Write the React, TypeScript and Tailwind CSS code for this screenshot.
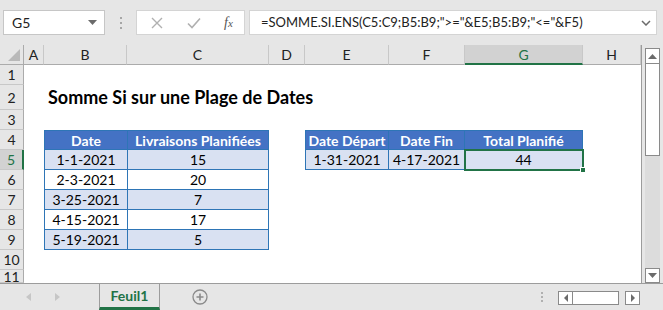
import React from "react";

const cols = ["A", "B", "C", "D", "E", "F", "G", "H"];
const rowHeights = [20, 25, 20, 20, 20, 20, 20, 20, 20, 20, 13];

const data = [
  ["1-1-2021", "15"],
  ["2-3-2021", "20"],
  ["3-25-2021", "7"],
  ["4-15-2021", "17"],
  ["5-19-2021", "5"],
];

function TopBar() {
  return (
    <div className="flex h-[45px] items-start bg-[#e6e6e6] pt-[10px]">
      {/* name box */}
      <div className="ml-[3px] flex h-[25px] w-[102px] shrink-0 items-center justify-between border border-[#c6c6c6] bg-white pl-[8px] pr-[7px] text-[14px] text-[#222]">
        <span>G5</span>
        <svg width="9" height="5" viewBox="0 0 9 5">
          <path d="M0 0h9L4.5 5z" fill="#6b6b6b" />
        </svg>
      </div>
      <div className="flex h-[25px] w-[31px] shrink-0 flex-col items-center justify-center gap-[3px]">
        <span className="h-[2px] w-[2px] bg-[#a6a6a6]" />
        <span className="h-[2px] w-[2px] bg-[#a6a6a6]" />
        <span className="h-[2px] w-[2px] bg-[#a6a6a6]" />
      </div>
      {/* formula buttons */}
      <div className="flex h-[25px] w-[109px] shrink-0 items-center border border-[#d4d4d4] bg-white">
        <svg className="ml-[14px]" width="12" height="12" viewBox="0 0 12 12">
          <path d="M1 1l10 10M11 1L1 11" stroke="#b0b0b0" strokeWidth="1.4" />
        </svg>
        <svg className="ml-[24px]" width="14" height="12" viewBox="0 0 14 12">
          <path d="M1 6.5l4 4L13 1.5" stroke="#b0b0b0" strokeWidth="1.6" fill="none" />
        </svg>
        <span className="ml-[23px] text-[14px] italic text-[#555]" style={{ fontFamily: "'Liberation Serif', serif" }}>
          f<span className="text-[11px]">x</span>
        </span>
      </div>
      {/* formula input */}
      <div className="ml-[4px] flex h-[25px] w-[408px] shrink-0 items-center justify-between border border-[#d4d4d4] bg-white pl-[11px] pr-[5px] text-[13px] text-[#222]">
        <span>=SOMME.SI.ENS(C5:C9;B5:B9;"&gt;="&amp;E5;B5:B9;"&lt;="&amp;F5)</span>
        <svg width="10" height="6" viewBox="0 0 10 6">
          <path d="M1 1l4 4 4-4" stroke="#6b6b6b" strokeWidth="1.5" fill="none" />
        </svg>
      </div>
    </div>
  );
}

function HeaderCell({ children, className = "" }: { children: React.ReactNode; className?: string }) {
  return (
    <div className={`flex items-center justify-center border-r border-[#c8c8c8] text-[14px] ${className}`}>
      {children}
    </div>
  );
}

function Cell({ children, className = "" }: { children: React.ReactNode; className?: string }) {
  return (
    <div className={`flex items-center justify-center border-r border-[#2e75b6] ${className}`}>
      {children}
    </div>
  );
}

function Sheet() {
  return (
    <div
      className="relative grid w-[642px] shrink-0 border-r border-[#9c9c9c] bg-white"
      style={{
        gridTemplateColumns: "24px 20px 83px 142px 36px 84px 76px 118px 58px",
        gridTemplateRows: `20px ${rowHeights.map((h) => h + "px").join(" ")}`,
      }}
    >
      {/* corner */}
      <div className="relative border-b border-r border-[#ababab] bg-[#e6e6e6]">
        <svg className="absolute bottom-[3px] right-[3px]" width="12" height="12" viewBox="0 0 12 12">
          <path d="M12 0v12H0z" fill="#b9b9b9" />
        </svg>
      </div>
      {cols.map((c) => (
        <HeaderCell
          key={c}
          className={
            c === "G"
              ? "border-b-2 border-b-[#217346] bg-[#d2d2d2] text-[#217346]"
              : "border-b border-b-[#ababab] bg-[#e6e6e6] text-[#222]"
          }
        >
          {c}
        </HeaderCell>
      ))}
      {rowHeights.map((h, i) => (
        <div
          key={i}
          className={`flex items-center justify-center border-b border-[#c8c8c8] text-[14px] ${
            i === 4
              ? "border-r-2 border-r-[#217346] bg-[#d2d2d2] text-[#217346]"
              : "border-r border-r-[#ababab] bg-[#e6e6e6] text-[#222]"
          }`}
          style={{ gridRow: i + 2, gridColumn: 1 }}
        >
          {i + 1}
        </div>
      ))}

      {/* title */}
      <div className="col-start-3 col-span-4 row-start-3 flex items-center pl-[4px] text-[18px] font-bold text-black">
        Somme Si sur une Plage de Dates
      </div>

      {/* deliveries table */}
      <div className="col-start-3 col-span-2 row-start-5 row-span-6 flex flex-col border-l border-t border-[#2e75b6] text-[14px] text-black">
        <div className="flex h-[19px] border-b border-[#2e75b6] bg-[#4472c4] font-bold text-white">
          <Cell className="w-[83px]">Date</Cell>
          <Cell className="flex-1">Livraisons Planifiées</Cell>
        </div>
        {data.map(([d, n], i) => (
          <div
            key={d}
            className={`flex h-[20px] border-b border-[#2e75b6] ${i % 2 === 0 ? "bg-[#d9e1f2]" : "bg-white"}`}
          >
            <Cell className="w-[83px]">{d}</Cell>
            <Cell className="flex-1">{n}</Cell>
          </div>
        ))}
      </div>

      {/* result table */}
      <div className="relative col-start-6 col-span-3 row-start-5 row-span-2 flex flex-col border-l border-t border-[#2e75b6] text-[14px] text-black">
        <div className="flex h-[19px] border-b border-[#2e75b6] bg-[#4472c4] font-bold text-white">
          <Cell className="w-[83px]">Date Départ</Cell>
          <Cell className="w-[76px]">Date Fin</Cell>
          <Cell className="flex-1">Total Planifié</Cell>
        </div>
        <div className="flex h-[20px] border-b border-[#2e75b6] bg-[#d9e1f2]">
          <Cell className="w-[83px]">1-31-2021</Cell>
          <Cell className="w-[76px]">4-17-2021</Cell>
          <Cell className="flex-1">44</Cell>
        </div>
        {/* selection */}
        <div className="absolute left-[158px] top-[18px] h-[22px] w-[120px] border-2 border-[#217346]" />
        <div className="absolute left-[274px] top-[36px] h-[6px] w-[6px] border border-white bg-[#217346]" />
      </div>
    </div>
  );
}

function VScroll() {
  return (
    <div className="flex w-[21px] shrink-0 flex-col bg-[#e6e6e6] px-[3px] pt-[3px]">
      <div className="flex flex-1 flex-col bg-[#dcdcdc]">
        <div className="flex h-[16px] shrink-0 items-center justify-center border border-[#8a8a8a] bg-white">
          <svg width="9" height="5" viewBox="0 0 9 5">
            <path d="M0 5h9L4.5 0z" fill="#6b6b6b" />
          </svg>
        </div>
        <div className="h-[92px] shrink-0 border border-t-0 border-[#8a8a8a] bg-white" />
        <div className="flex-1" />
        <div className="flex h-[15px] shrink-0 items-center justify-center border border-[#8a8a8a] bg-white">
          <svg width="9" height="5" viewBox="0 0 9 5">
            <path d="M0 0h9L4.5 5z" fill="#6b6b6b" />
          </svg>
        </div>
      </div>
    </div>
  );
}

function TabBar() {
  return (
    <div className="flex h-[27px] items-start border-t border-[#9c9c9c] bg-[#e6e6e6]">
      <div className="flex h-[26px] w-[99px] shrink-0 items-center gap-[24px] pl-[26px]">
        <svg width="5" height="8" viewBox="0 0 5 8">
          <path d="M5 0v8L0 4z" fill="#c6c6c6" />
        </svg>
        <svg width="5" height="8" viewBox="0 0 5 8">
          <path d="M0 0v8l5-4z" fill="#c6c6c6" />
        </svg>
      </div>
      <div className="-mt-[1px] flex h-[27px] w-[61px] shrink-0 items-center justify-center border-x border-t border-[#9c9c9c] border-b-[3px] border-b-[#217346] bg-[#e6e6e6] text-[14px] font-bold text-[#217346]">
        Feuil1
      </div>
      <div className="ml-[32px] flex h-[26px] shrink-0 items-center">
        <svg width="16" height="16" viewBox="0 0 16 16">
          <circle cx="8" cy="8" r="7" fill="none" stroke="#8a8a8a" strokeWidth="1.3" />
          <path d="M8 4.5v7M4.5 8h7" stroke="#8a8a8a" strokeWidth="1.6" />
        </svg>
      </div>
      <div className="ml-[333px] flex h-[26px] shrink-0 flex-col justify-center gap-[2px]">
        <span className="h-[2px] w-[2px] bg-[#b0b0b0]" />
        <span className="h-[2px] w-[2px] bg-[#b0b0b0]" />
        <span className="h-[2px] w-[2px] bg-[#b0b0b0]" />
      </div>
      <div className="ml-[15px] mt-[7px] flex h-[14px] shrink-0 items-stretch">
        <div className="flex w-[15px] items-center justify-center border border-[#8a8a8a] bg-white">
          <svg width="4" height="8" viewBox="0 0 4 8">
            <path d="M4 0v8L0 4z" fill="#6b6b6b" />
          </svg>
        </div>
        <div className="w-[46px] border border-l-0 border-[#8a8a8a] bg-white" />
        <div className="w-[6px]" />
        <div className="flex w-[15px] items-center justify-center border border-[#8a8a8a] bg-white">
          <svg width="4" height="8" viewBox="0 0 4 8">
            <path d="M0 0v8l4-4z" fill="#6b6b6b" />
          </svg>
        </div>
      </div>
    </div>
  );
}

export default function App() {
  return (
    <div
      className="h-[310px] w-[663px] overflow-hidden bg-[#e6e6e6]"
      style={{ fontFamily: "Lato, 'Open Sans', sans-serif" }}
    >
      <TopBar />
      <div className="flex h-[238px]">
        <Sheet />
        <VScroll />
      </div>
      <TabBar />
    </div>
  );
}
